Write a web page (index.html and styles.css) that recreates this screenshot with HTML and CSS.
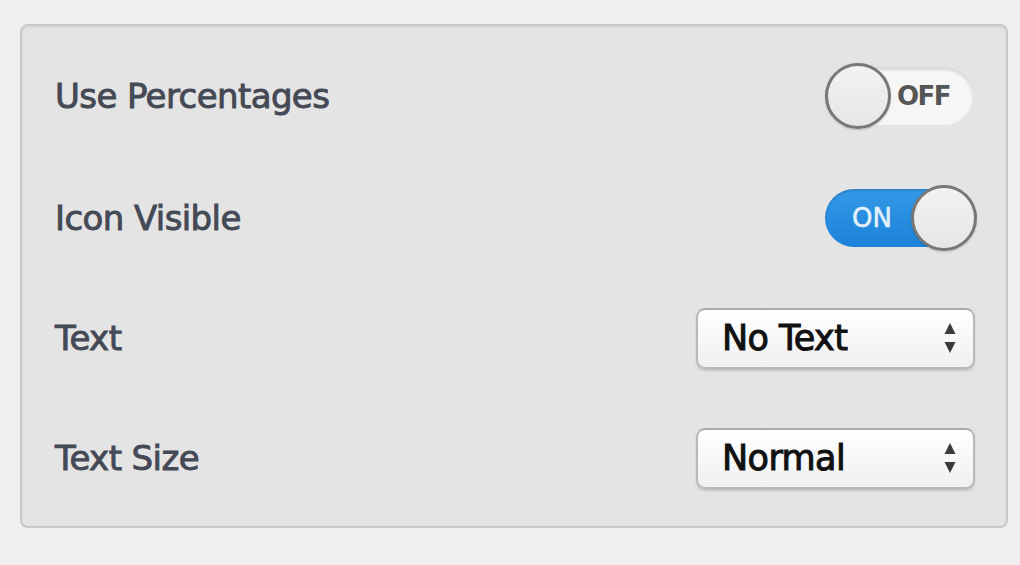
FILE: index.html
```html
<!DOCTYPE html>
<html>
<head>
<meta charset="utf-8">
<link rel="stylesheet" href="styles.css">
</head>
<body>
<div class="panel">
  <div class="row">
    <span class="label">Use Percentages</span>
    <div class="toggle off">
      <span class="knob"></span>
      <span class="state">OFF</span>
    </div>
  </div>
  <div class="row">
    <span class="label">Icon Visible</span>
    <div class="toggle on">
      <span class="state">ON</span>
      <span class="knob"></span>
    </div>
  </div>
  <div class="row">
    <span class="label">Text</span>
    <div class="select">
      <span class="value">No Text</span>
      <svg class="arrows" width="12" height="30" viewBox="0 0 12 30"><path d="M6 0 L11.5 11 L0.5 11 Z" fill="#3a3a3a"/><path d="M0.5 19 L11.5 19 L6 30 Z" fill="#3a3a3a"/></svg>
    </div>
  </div>
  <div class="row">
    <span class="label">Text Size</span>
    <div class="select">
      <span class="value">Normal</span>
      <svg class="arrows" width="12" height="30" viewBox="0 0 12 30"><path d="M6 0 L11.5 11 L0.5 11 Z" fill="#3a3a3a"/><path d="M0.5 19 L11.5 19 L6 30 Z" fill="#3a3a3a"/></svg>
    </div>
  </div>
</div>
</body>
</html>
```

FILE: styles.css
```css
html, body {
  margin: 0;
  padding: 0;
}
body {
  width: 1020px;
  height: 565px;
  background: #efefef;
  padding: 24px 12px 0 20px;
  box-sizing: border-box;
  font-family: "DejaVu Sans", "Liberation Sans", sans-serif;
  overflow: hidden;
}
.panel {
  width: 988px;
  height: 504px;
  box-sizing: border-box;
  background: #e4e4e4;
  border: 2px solid #c8c8c8;
  border-radius: 8px;
  box-shadow: inset 0 2px 2px rgba(0,0,0,0.06);
  padding: 38px 31px 0 33px;
  display: flex;
  flex-direction: column;
  gap: 56px;
}
.row {
  height: 64px;
  display: flex;
  align-items: center;
  justify-content: space-between;
}
.row:nth-child(2) {
  margin-top: 2px;
}
.label {
  font-size: 34px;
  letter-spacing: -0.6px;
  color: #444955;
  -webkit-text-stroke: 0.9px #444955;
}
.toggle {
  position: relative;
  width: 148px;
  height: 58px;
  border-radius: 29px;
  box-sizing: border-box;
  display: flex;
  align-items: center;
  margin-right: 2px;
}
.toggle.off {
  background: #f6f6f6;
  box-shadow: inset 0 3px 3px rgba(0,0,0,0.12);
}
.toggle.on {
  background: linear-gradient(#3499e6, #1c82da);
  box-shadow: inset 0 2px 2px rgba(0,0,0,0.15);
}
.knob {
  width: 66px;
  height: 66px;
  box-sizing: border-box;
  border-radius: 50%;
  border: 3px solid #777;
  background: linear-gradient(#f2f2f2, #e6e6e6);
  box-shadow: 0 1px 2px rgba(0,0,0,0.2);
  flex: none;
}
.toggle.on .knob {
  margin-left: auto;
  margin-right: -4px;
}
.state {
  font-size: 26px;
}
.toggle.off .state {
  font-weight: bold;
  color: #555;
  margin-left: 6px;
  letter-spacing: -1.5px;
}
.toggle.on .state {
  color: #e4f1fb;
  margin-left: 27px;
  -webkit-text-stroke: 0.5px #e4f1fb;
}
.select {
  width: 279px;
  height: 61px;
  box-sizing: border-box;
  border: 2px solid #b9b9b9;
  border-top-color: #aaa;
  border-radius: 9px;
  background: linear-gradient(#ffffff, #f0f0f0);
  box-shadow: 0 2px 2px rgba(0,0,0,0.15);
  display: flex;
  align-items: center;
  justify-content: space-between;
  padding: 0 17px 0 24px;
}
.value {
  font-size: 35px;
  color: #111;
  letter-spacing: -0.6px;
  -webkit-text-stroke: 1px #111;
}
.arrows {
  display: block;
}
```
